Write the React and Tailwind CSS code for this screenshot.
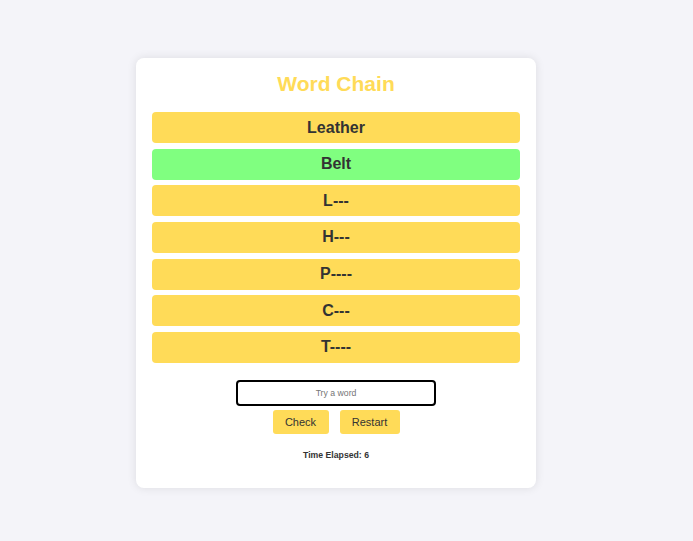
import { useState } from "react";

const words = [
  { text: "Leather", solved: false },
  { text: "Belt", solved: true },
  { text: "L---", solved: false },
  { text: "H---", solved: false },
  { text: "P----", solved: false },
  { text: "C---", solved: false },
  { text: "T----", solved: false },
];

const App = () => {
  const [guess, setGuess] = useState("");

  return (
    <div
      className="min-h-screen bg-[#f4f4f9] flex justify-center pt-[58px] pr-[21px]"
      style={{ fontFamily: '"Liberation Sans", Arial, sans-serif' }}
    >
      <div className="w-[400px] h-[430px] bg-white rounded-[8px] shadow-[0_0_10px_rgba(0,0,0,0.1)] px-4 pt-[14px] flex flex-col">
        {/* Title */}
        <h1 className="text-[21px] leading-[24px] font-bold text-[#ffdb58] text-center">
          Word Chain
        </h1>

        {/* Chain */}
        <div className="mt-[16px] flex flex-col gap-[5.67px]">
          {words.map((w, i) => (
            <div
              key={i}
              className={`h-[31px] rounded-[4px] flex items-center justify-center text-[16px] font-bold text-[#333] ${
                w.solved ? "bg-[#80ff80]" : "bg-[#ffdb58]"
              }`}
            >
              {w.text}
            </div>
          ))}
        </div>

        {/* Input + buttons */}
        <div className="mt-[17px] flex flex-col items-center">
          <input
            value={guess}
            onChange={(e) => setGuess(e.target.value)}
            placeholder="Try a word"
            className="w-[200px] h-[26px] border-2 border-black rounded-[4px] text-center text-[8.7px] text-[#333] placeholder:text-[#757575] outline-none"
          />
          <div className="mt-[4px] flex gap-[11px]">
            <button className="h-[24px] w-[56px] bg-[#ffdb58] rounded-[3px] text-[11px] text-[#333]">
              Check
            </button>
            <button className="h-[24px] w-[60px] bg-[#ffdb58] rounded-[3px] text-[11px] text-[#333]">
              Restart
            </button>
          </div>
          <p className="mt-[15px] text-[8.7px] font-bold text-[#333]">Time Elapsed: 6</p>
        </div>
      </div>
    </div>
  );
};

export default App;
